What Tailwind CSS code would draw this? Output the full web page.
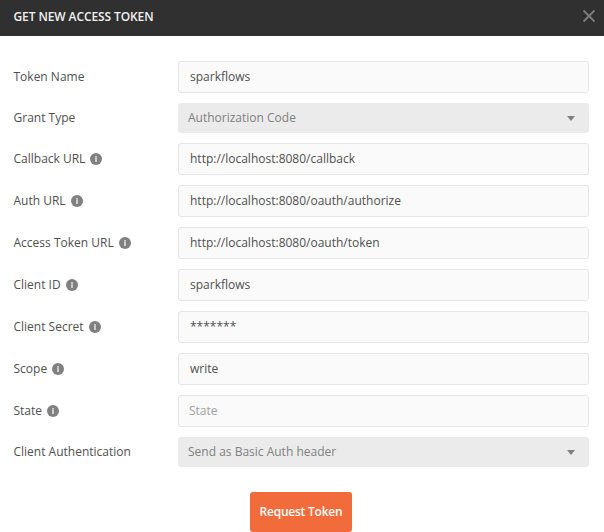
<!DOCTYPE html>
<html lang="en">
<head>
<meta charset="utf-8">
<title>Get New Access Token</title>
<script src="https://cdn.jsdelivr.net/npm/@tailwindcss/browser@4"></script>
</head>
<body class="w-[604px] h-[532px] overflow-hidden bg-white font-['Open_Sans',sans-serif] text-[12px] leading-4 text-[#505050]">
<svg class="hidden"><defs>
<symbol id="info" viewBox="0 0 12 12"><circle cx="6" cy="6" r="6" fill="#808080"/><path d="M5.2 3h1.6v1.4H5.2zM5.2 4.8h1.6V9H5.2z" fill="#e0e0e0"/></symbol>
<symbol id="caret" viewBox="0 0 8 5"><path d="M0 0h8L4 5z" fill="#808080"/></symbol>
</defs></svg>
<header class="h-9 bg-[#303030] flex items-center justify-between pl-[13.5px] pr-[9px] pb-[3px] text-[#f0f0f0] font-semibold">
  <h1 class="tracking-[-0.1px]">GET NEW ACCESS TOKEN</h1>
  <svg class="size-3 mt-[-1px]" viewBox="0 0 12 12" fill="none" stroke="#808080" stroke-width="1.9"><path d="M.5.5l11 11M11.5.5l-11 11"/></svg>
</header>
<main class="pt-[25px] pl-[13.5px] pr-[15px] flex flex-col">
  <div class="flex flex-col gap-[10px]">
    <div class="flex items-center h-8"><div class="w-[164.5px]">Token Name</div><div class="flex-1 h-8 flex items-center rounded-[3px] border border-[#e6e6e6] bg-[#fafafa] pl-[11px]">sparkflows</div></div>
    <div class="flex items-center h-[30px]"><div class="w-[164.5px]">Grant Type</div><div class="flex-1 h-[30px] flex items-center justify-between rounded-[3px] bg-[#ebebeb] pl-[10px] pr-[14px] text-[#808080]">Authorization Code<svg class="w-2 h-[5px]"><use href="#caret"/></svg></div></div>
    <div class="flex items-center h-8"><div class="w-[164.5px] flex items-center gap-[5px]">Callback URL<svg class="size-3"><use href="#info"/></svg></div><div class="flex-1 h-8 flex items-center rounded-[3px] border border-[#e6e6e6] bg-[#fafafa] pl-[11px]">http://localhost:8080/callback</div></div>
    <div class="flex items-center h-8"><div class="w-[164.5px] flex items-center gap-[5px]">Auth URL<svg class="size-3"><use href="#info"/></svg></div><div class="flex-1 h-8 flex items-center rounded-[3px] border border-[#e6e6e6] bg-[#fafafa] pl-[11px]">http://localhost:8080/oauth/authorize</div></div>
    <div class="flex items-center h-8"><div class="w-[164.5px] flex items-center gap-[5px]">Access Token URL<svg class="size-3"><use href="#info"/></svg></div><div class="flex-1 h-8 flex items-center rounded-[3px] border border-[#e6e6e6] bg-[#fafafa] pl-[11px]">http://localhost:8080/oauth/token</div></div>
    <div class="flex items-center h-8"><div class="w-[164.5px] flex items-center gap-[5px]">Client ID<svg class="size-3"><use href="#info"/></svg></div><div class="flex-1 h-8 flex items-center rounded-[3px] border border-[#e6e6e6] bg-[#fafafa] pl-[11px]">sparkflows</div></div>
    <div class="flex items-center h-8"><div class="w-[164.5px] flex items-center gap-[5px]">Client Secret<svg class="size-3"><use href="#info"/></svg></div><div class="flex-1 h-8 flex items-center rounded-[3px] border border-[#e6e6e6] bg-[#fafafa] pl-[11px]">*******</div></div>
    <div class="flex items-center h-8"><div class="w-[164.5px] flex items-center gap-[5px]">Scope<svg class="size-3"><use href="#info"/></svg></div><div class="flex-1 h-8 flex items-center rounded-[3px] border border-[#e6e6e6] bg-[#fafafa] pl-[11px]">write</div></div>
    <div class="flex items-center h-8"><div class="w-[164.5px] flex items-center gap-[5px]">State<svg class="size-3"><use href="#info"/></svg></div><div class="flex-1 h-8 flex items-center rounded-[3px] border border-[#e6e6e6] bg-[#fafafa] pl-[10px] text-[#a0a0a0]">State</div></div>
    <div class="flex items-center h-[30px]"><div class="w-[164.5px]">Client Authentication</div><div class="flex-1 h-[30px] flex items-center justify-between rounded-[3px] bg-[#ebebeb] pl-[10px] pr-[14px] text-[#808080]">Send as Basic Auth header<svg class="w-2 h-[5px]"><use href="#caret"/></svg></div></div>
  </div>
  <button class="mt-[25px] ml-[236.5px] w-[102px] h-10 rounded-[3px] bg-[#f26b3a] text-white font-semibold tracking-[-0.22px]">Request Token</button>
</main>
</body>
</html>
